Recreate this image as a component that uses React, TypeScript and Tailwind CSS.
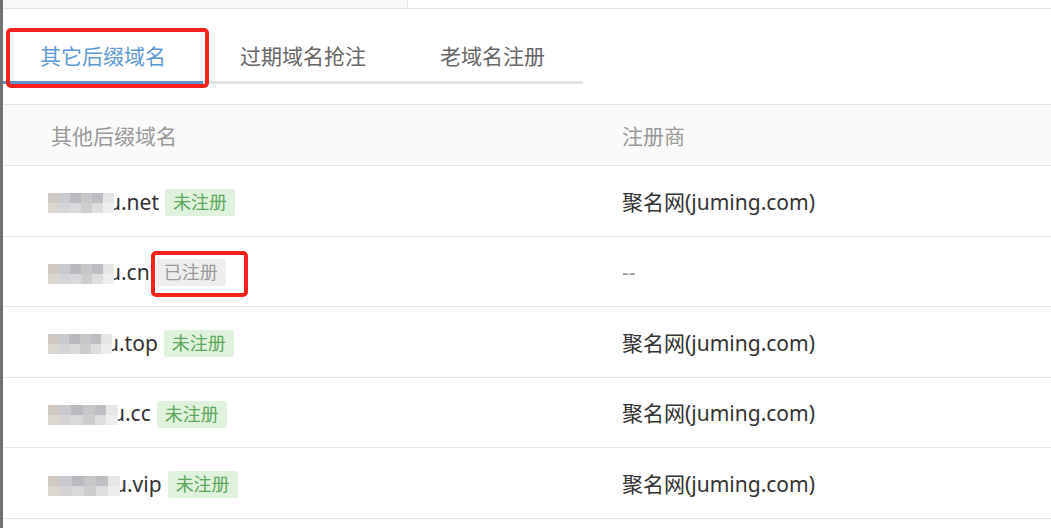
const tabs = ["其它后缀域名", "过期域名抢注", "老域名注册"];

const rows = [
  { tld: ".net", blur: 66, registered: false },
  { tld: ".cn", blur: 66, registered: true },
  { tld: ".top", blur: 64, registered: false },
  { tld: ".cc", blur: 70, registered: false },
  { tld: ".vip", blur: 72, registered: false },
];

// pixelated blur, two rows of blocks
const shades = [
  ["#cfc8c3", "#c9cacf", "#b9b9bf", "#c7c7ca", "#bebec2", "#e6e6e6"],
  ["#dcd6d1", "#d4d4d6", "#d9d9db", "#cdcdcf", "#dedede", "#eeeeee"],
];

function Blur({ width }: { width: number }) {
  return (
    <span
      className="relative z-10 -mr-[6px] mt-[2px] flex flex-col overflow-hidden"
      style={{ width }}
    >
      {shades.map((line, i) => (
        <span key={i} className="flex h-[10px]">
          {line.map((c, j) => (
            <span key={j} className="h-full flex-1" style={{ background: c }} />
          ))}
        </span>
      ))}
    </span>
  );
}

export default function App() {
  return (
    <div
      className="relative h-[528px] w-[1051px] overflow-hidden border-l-[3px] border-[#727272] bg-white text-[#333]"
      style={{ fontFamily: '"Noto Sans", "Noto Sans CJK SC", sans-serif' }}
    >
      <div className="flex h-[9px] border-b border-[#e4e4e4]">
        <div className="w-[405px] border-r border-[#e4e4e4] bg-[#f8f8f8]" />
      </div>

      <div className="mt-[22px] flex w-[580px] border-b-[3px] border-[#e2e2e2]">
        {tabs.map((t, i) => (
          <div
            key={t}
            className={`-mb-[3px] flex h-[53px] items-center px-[37px] text-[21px] leading-none ${
              i === 0
                ? "border-b-[3px] border-[#5f95cf] text-[#5b9bd5]"
                : "border-b-[3px] border-transparent text-[#666]"
            }`}
          >
            {t}
          </div>
        ))}
      </div>

      <div className="mt-[20px] border-t border-[#e6e6e6]">
        <div className="grid h-[61px] grid-cols-[571px_1fr] items-center border-b border-[#e6e6e6] bg-[#fafafa] pt-[4px] text-[21px] text-[#999]">
          <div className="pl-12">其他后缀域名</div>
          <div className="pl-12">注册商</div>
        </div>
        {rows.map((r) => (
          <div
            key={r.tld}
            className="grid h-[70.6px] grid-cols-[571px_1fr] items-center border-b border-[#e6e6e6] pt-[3px] text-[21px]"
          >
            <div className="flex items-center pl-[45px]">
              <Blur width={r.blur} />
              <span>u{r.tld}</span>
              {r.registered ? (
                <span className="ml-[6px] inline-flex h-[27px] items-center rounded-[3px] bg-[#eeeeee] px-[8px] text-[18px] text-[#999]">
                  已注册
                </span>
              ) : (
                <span className="ml-[6px] inline-flex h-[27px] items-center rounded-[3px] bg-[#dff2db] px-[8px] text-[18px] text-[#5aa85a]">
                  未注册
                </span>
              )}
            </div>
            <div className={`pl-12 ${r.registered ? "text-[#999]" : ""}`}>
              {r.registered ? "--" : "聚名网(juming.com)"}
            </div>
          </div>
        ))}
      </div>

      {/* annotation boxes */}
      <div className="absolute left-[3px] top-[28px] h-[60px] w-[203px] rounded-[5px] border-4 border-[#f5221b]" />
      <div className="absolute left-[148px] top-[251px] h-[46px] w-[97px] rounded-[5px] border-4 border-[#f5221b]" />
    </div>
  );
}
